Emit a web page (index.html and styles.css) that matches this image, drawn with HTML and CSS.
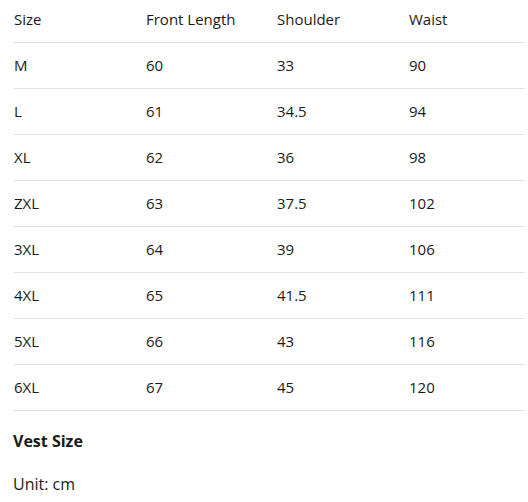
FILE: index.html
```html
<!DOCTYPE html>
<html>
<head>
<meta charset="utf-8">
<link rel="stylesheet" href="styles.css">
</head>
<body>
<div class="page">
<table class="sizes">
<thead>
<tr><th class="c1">Size</th><th class="c2">Front Length</th><th class="c3">Shoulder</th><th class="c4">Waist</th></tr>
</thead>
<tbody>
<tr><td>M</td><td>60</td><td>33</td><td>90</td></tr>
<tr><td>L</td><td>61</td><td>34.5</td><td>94</td></tr>
<tr><td>XL</td><td>62</td><td>36</td><td>98</td></tr>
<tr><td>ZXL</td><td>63</td><td>37.5</td><td>102</td></tr>
<tr><td>3XL</td><td>64</td><td>39</td><td>106</td></tr>
<tr><td>4XL</td><td>65</td><td>41.5</td><td>111</td></tr>
<tr><td>5XL</td><td>66</td><td>43</td><td>116</td></tr>
<tr><td>6XL</td><td>67</td><td>45</td><td>120</td></tr>
</tbody>
</table>
<p class="title">Vest Size</p>
<p class="unit">Unit: cm</p>
</div>
</body>
</html>
```
FILE: styles.css
```css
html, body {
  margin: 0;
  padding: 0;
  background: #fff;
}
body {
  font-family: "Open Sans", "Noto Sans", sans-serif;
  font-size: 15px;
  color: #1a1a1a;
}
.page {
  padding: 0 3px 0 13px;
}
.sizes {
  width: 512px;
  border-collapse: collapse;
  table-layout: fixed;
}
.sizes th, .sizes td {
  text-align: left;
  font-weight: normal;
  padding: 0 0 0 1px;
  border-bottom: 1px solid #e3e3e3;
}
.sizes th {
  height: 42px;
  padding-bottom: 3px;
  box-sizing: border-box;
}
.sizes td {
  height: 45px;
}
.c1 { width: 132px; }
.c2 { width: 131px; }
.c3 { width: 132px; }
.title {
  margin: 0;
  padding-top: 20px;
  line-height: 20px;
  font-weight: bold;
  font-size: 16px;
}
.unit {
  margin: 0;
  padding-top: 23px;
  line-height: 20px;
  font-size: 16px;
}
```
